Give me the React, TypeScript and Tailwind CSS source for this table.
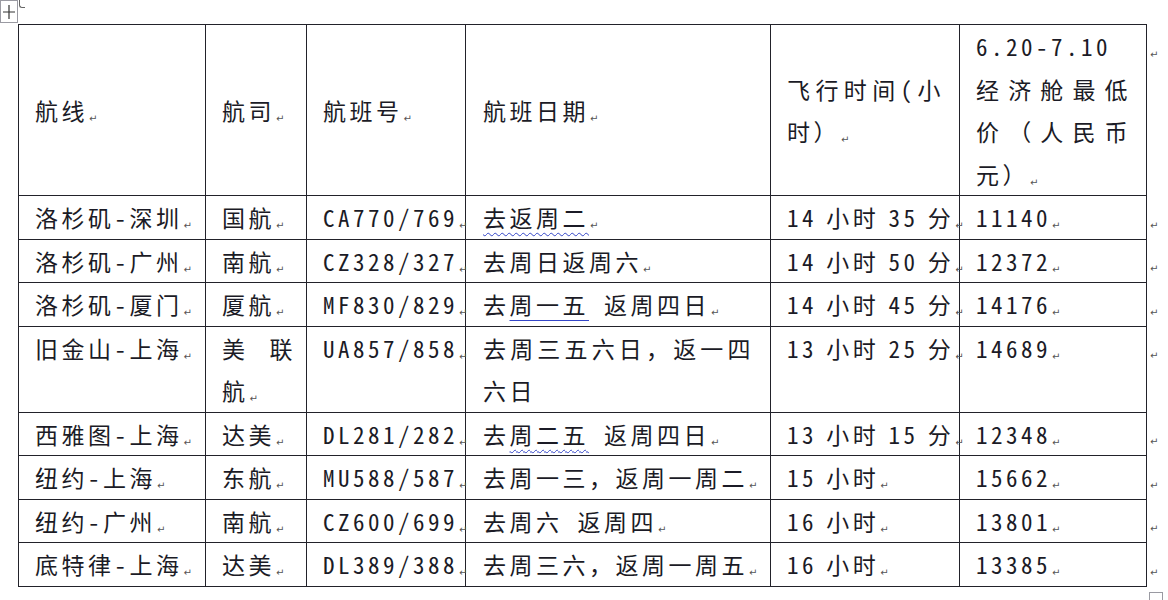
import type { ReactNode } from "react";

type Row = {
  route: string;
  airline: ReactNode;
  flight: string;
  days: ReactNode;
  time: string;
  price: string;
  tall?: boolean;
};

const S = "\u2005";

function Mark() {
  return (
    <span className="ml-[1px] inline-block align-[-2px] font-['DejaVu_Sans',sans-serif] text-[10px] leading-none tracking-normal text-[#555] [font-feature-settings:normal]">
      ↵
    </span>
  );
}

// full-width punctuation keeps its em box (the cell text uses half-width latin)
function Fw({ children }: { children: ReactNode }) {
  return <span className="[font-feature-settings:normal]">{children}</span>;
}

function Wavy({ children }: { children: ReactNode }) {
  return (
    <span className="underline decoration-[#3446c8] decoration-wavy decoration-1 underline-offset-[5px]">
      {children}
    </span>
  );
}

function Line({ children }: { children: ReactNode }) {
  return (
    <span className="underline decoration-[#3446c8] decoration-1 underline-offset-[6px]">
      {children}
    </span>
  );
}

const rows: Row[] = [
  { route: "洛杉矶-深圳", airline: "国航", flight: "CA770/769", days: <Wavy>去返周二</Wavy>, time: `14${S}小时${S}35${S}分`, price: "11140" },
  { route: "洛杉矶-广州", airline: "南航", flight: "CZ328/327", days: "去周日返周六", time: `14${S}小时${S}50${S}分`, price: "12372" },
  { route: "洛杉矶-厦门", airline: "厦航", flight: "MF830/829", days: <>去<Line>周一五</Line> 返周四日</>, time: `14${S}小时${S}45${S}分`, price: "14176" },
  { route: "旧金山-上海", airline: "美联航", flight: "UA857/858", days: <>去周三五六日<Fw>，</Fw>返一四六日</>, time: `13${S}小时${S}25${S}分`, price: "14689", tall: true },
  { route: "西雅图-上海", airline: "达美", flight: "DL281/282", days: <>去<Wavy>周二五</Wavy> 返周四日</>, time: `13${S}小时${S}15${S}分`, price: "12348" },
  { route: "纽约-上海", airline: "东航", flight: "MU588/587", days: <>去周一三<Fw>，</Fw>返周一周二</>, time: `15${S}小时`, price: "15662" },
  { route: "纽约-广州", airline: "南航", flight: "CZ600/699", days: "去周六 返周四", time: `16${S}小时`, price: "13801" },
  { route: "底特律-上海", airline: "达美", flight: "DL389/388", days: <>去周三六<Fw>，</Fw>返周一周五</>, time: `16${S}小时`, price: "13385" },
];

const cell = "border-[1.5px] border-[#22222a] p-0 pl-[16px] text-justify";

export default function App() {
  return (
    <div className="relative min-h-[600px] w-[1168px] overflow-hidden bg-white pl-[18px] pt-[24px] font-['Noto_Sans_CJK_SC',sans-serif] text-[23px] leading-[42.5px] tracking-[3.5px] text-[#1b1b26] [font-feature-settings:'hwid']">
      {/* word table move handle */}
      <div className="absolute left-0 top-0 flex h-[23px] w-[18px] items-center justify-center border border-[#9a9aa2] bg-white">
        <svg width="14" height="16" viewBox="0 0 14 16" className="text-[#333]">
          <path d="M7 1V15M1 8H13" stroke="currentColor" strokeWidth="1.2" />
        </svg>
      </div>
      <div className="absolute left-[19px] top-0 h-[8px] w-[6px] rounded-bl-[3px] border-b border-l border-[#666]" />

      <table className="w-[1148px] table-fixed border-collapse">
        <colgroup>
          <col className="w-[187px]" />
          <col className="w-[101px]" />
          <col className="w-[159px]" />
          <col className="w-[305px]" />
          <col className="w-[189px]" />
          <col className="w-[187px]" />
          <col className="w-[20px]" />
        </colgroup>
        <tbody>
          <tr>
            <td className={`${cell} align-middle`}>
              航线<Mark />
            </td>
            <td className={`${cell} align-middle`}>
              航司<Mark />
            </td>
            <td className={`${cell} align-middle`}>
              航班号<Mark />
            </td>
            <td className={`${cell} pl-[17px] align-middle`}>
              航班日期<Mark />
            </td>
            <td className={`${cell} pr-[15px] align-middle`}>
              飞行时间(小时<Fw>）</Fw>
              <Mark />
            </td>
            <td className={`${cell} pr-[15px] align-top`}>
              6.20-7.10
              <br />
              经济舱最低价<Fw>（</Fw>人民币元<Fw>）</Fw>
              <Mark />
            </td>
            <td className="p-0 pl-[2px] align-top">
              <Mark />
            </td>
          </tr>
          {rows.map((r) => (
            <tr key={r.flight}>
              <td className={`${cell} whitespace-nowrap align-top`}>
                {r.route}
                <Mark />
              </td>
              <td className={`${cell} pr-[10px] align-top ${r.tall ? "" : "whitespace-nowrap"}`}>
                {r.airline}
                <Mark />
              </td>
              <td className={`${cell} whitespace-nowrap align-top`}>
                {r.flight}
                <Mark />
              </td>
              <td className={`${cell} pl-[17px] pr-[16px] align-top ${r.tall ? "" : "whitespace-nowrap"}`}>
                {r.days}
                {r.tall ? null : <Mark />}
              </td>
              <td className={`${cell} whitespace-nowrap align-top`}>
                {r.time}
                <Mark />
              </td>
              <td className={`${cell} whitespace-nowrap align-top`}>
                {r.price}
                <Mark />
              </td>
              <td className="p-0 pl-[2px] align-top">
                <Mark />
              </td>
            </tr>
          ))}
        </tbody>
      </table>

      <div className="absolute left-[1149px] top-[592px] h-[12px] w-[14px] border border-[#9a9aa2] bg-white" />
    </div>
  );
}
